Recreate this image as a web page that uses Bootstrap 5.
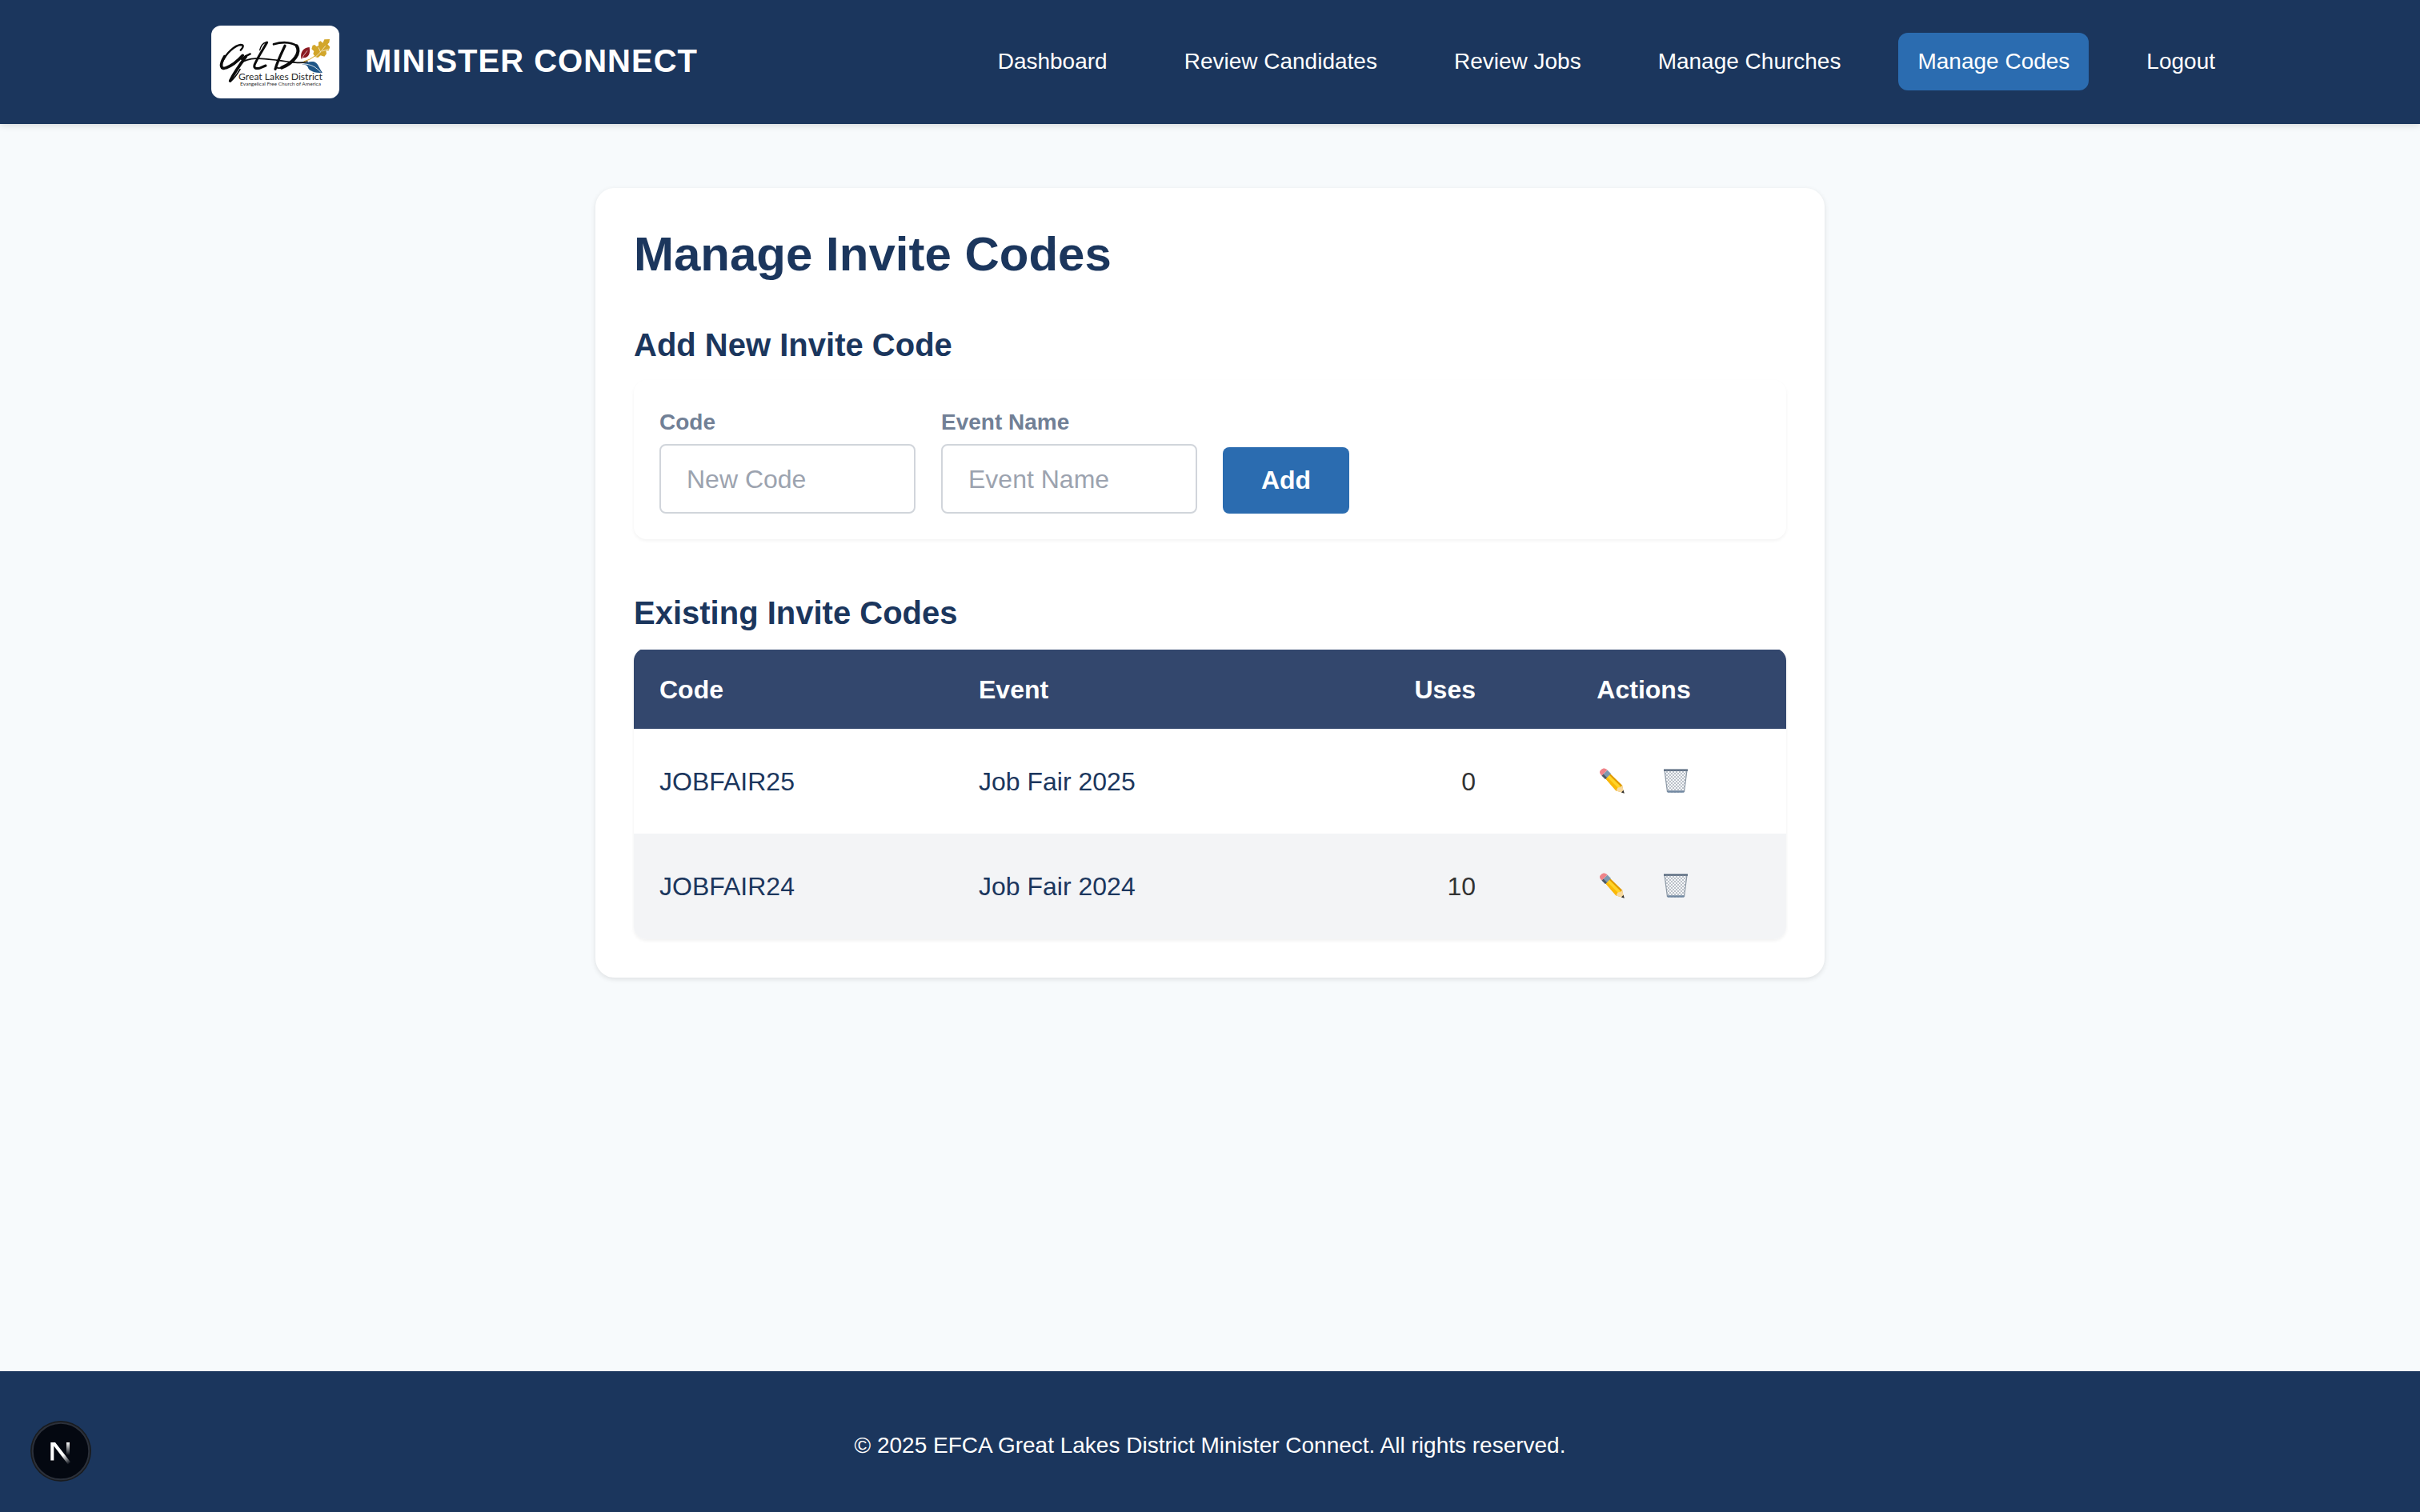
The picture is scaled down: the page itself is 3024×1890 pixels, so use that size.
<!DOCTYPE html>
<html lang="en">
<head>
<meta charset="utf-8">
<title>Minister Connect</title>
<link href="https://cdn.jsdelivr.net/npm/bootstrap@5.3.0/dist/css/bootstrap.min.css" rel="stylesheet">
<style>
  body { font-family: "Liberation Sans", Arial, sans-serif; font-size: 32px; line-height: 48px; background: #f7fafc; color: #333; }
  .site-header { background: #1b365d; height: 155px; box-shadow: 0 2px 8px rgba(0,0,0,.13); z-index: 2; }
  .site-inner { width: 2560px; padding-left: 32px; }
  .logo-tile { width: 160px; height: 91px; border-radius: 12px; background: #fff; }
  .site-title { font-size: 40px; letter-spacing: 1px; line-height: 56px; margin-left: 32px; padding-bottom: 3px; }
  .site-nav { gap: 48px; padding-bottom: 1px; }
  .site-nav .nav-link { font-size: 28px; line-height: 40px; padding: 16px 24px; border-radius: 12px; color: #fff; white-space: nowrap; }
  .site-nav .nav-link.active { background: #2b6cb0; }
  .panel { width: 1536px; margin-top: 80px; padding: 47px 48px 48px; border-radius: 24px; background: #fff; box-shadow: 0 2px 6px rgba(0,0,0,.11); }
  h1, h2, .navy { color: #1b365d; }
  h1 { font-size: 60px; line-height: 72px; margin-bottom: 49px; }
  h2 { font-size: 40px; line-height: 56px; margin-bottom: 16px; }
  .code-form { padding: 32px; gap: 32px; border-radius: 16px; margin-bottom: 64px; box-shadow: 0 2px 4px rgba(0,0,0,.05); }
  .code-form label { font-size: 28px; line-height: 40px; padding-top: 1px; margin-bottom: 7px; color: #718096; }
  .code-form .form-control { width: 320px; height: 87px; border: 2px solid #d1d5db; border-radius: 8px; padding: 18px 32px 16px; font-size: 32px; }
  .code-form .form-control::placeholder { color: #9ca3af; }
  .btn-add { width: 158px; height: 83px; border-radius: 8px; background: #2b6cb0; color: #fff; font-size: 32px; padding: 0 0 1px; }
  .codes-wrap { border-radius: 16px; padding-top: 2px; height: 364px; box-shadow: 0 2px 4px rgba(0,0,0,.06); }
  .codes { table-layout: fixed; margin: 0; color: inherit; }
  .codes th, .codes td { padding: 0 32px; border: 0; vertical-align: middle; box-shadow: none; color: inherit; }
  .codes thead th { height: 99px; background: #33476d; color: #fff; }
  .codes tbody td { height: 131px; background: #fff; }
  .codes tbody tr:last-child td { height: 132px; background: #f3f4f6; }
  .codes td.navy { color: #1b365d; }
  .acts { gap: 44px; padding-bottom: 2px; }
  .site-footer { background: #1b365d; height: 176px; padding-top: 9px; font-size: 28px; }
  .dev-badge { left: 38px; bottom: 38px; width: 76px; height: 76px; }
</style>
<script src="https://cdn.jsdelivr.net/npm/bootstrap@5.3.0/dist/js/bootstrap.bundle.min.js"></script>
</head>
<body class="d-flex flex-column min-vh-100">
<svg width="0" height="0" class="position-absolute" aria-hidden="true">
  <defs>
    <linearGradient id="body" x1="0" y1="1" x2="1" y2="0"><stop offset="0" stop-color="#f0a800"/><stop offset=".5" stop-color="#ffcc12"/><stop offset="1" stop-color="#c98700"/></linearGradient>
    <pattern id="mesh" width="4" height="4" patternUnits="userSpaceOnUse"><path d="M0 0L4 4M4 0L0 4" stroke="#929ba6" stroke-width=".6"/></pattern>
    <symbol id="pencil" viewBox="0 0 34 34">
      <path d="M9 14L15 8L30 22.500L32 32L22.500 29.500Z" fill="#e09a00"/>
      <path d="M9 14L13.500 9.500L28.500 24.500L25 28.500L22.500 29.500Z" fill="#fbb908"/>
      <path d="M11 12L13.500 9.500L28.500 24.500L26 27Z" fill="#ffd42a"/>
      <path d="M22.500 29.500L24.500 25.500L28 25L30 22.500L32.500 32.500Z" fill="#f7d9a0"/>
      <path d="M29 31.400L31.600 28.800L32.800 32.800Z" fill="#2b2b2b"/>
      <path d="M4.500 10.500L11.500 3.500L16 8L9 15Z" fill="#7e99b0"/>
      <path d="M4.500 10.500L6.500 8.500L11 13L9 15Z" fill="#4d5965"/>
      <path d="M4.500 10.500C1 7 1.500 5 4 3C6 1 8.500 .8 11.500 3.500Z" fill="#ef8389"/>
    </symbol>
    <symbol id="trash" viewBox="0 0 34 34">
      <path d="M3 4H31L27.500 31Q17 33 6.500 31Z" fill="#f5f7f9"/>
      <path d="M3 4H31L27.500 31Q17 33 6.500 31Z" fill="url(#mesh)"/>
      <path d="M3 4L6.500 31M31 4L27.500 31" stroke="#8c98a5" stroke-width="1.200"/>
      <path d="M2 2.500H32V4.800H2Z" fill="#53657a"/>
      <path d="M6.300 29.300H27.700L27.300 31.800H6.700Z" fill="#7289a2"/>
    </symbol>
    <linearGradient id="nd" gradientUnits="userSpaceOnUse" x1="80" y1="128" x2="88" y2="139"><stop offset="0" stop-color="#fff"/><stop offset="1" stop-color="#fff" stop-opacity="0"/></linearGradient>
    <linearGradient id="nv" x1="0" y1="0" x2="0" y2="1"><stop offset="0" stop-color="#fff"/><stop offset="1" stop-color="#fff" stop-opacity="0"/></linearGradient>
  </defs>
</svg>

<header class="site-header position-relative d-flex justify-content-center">
  <div class="site-inner d-flex align-items-center justify-content-between">
    <div class="d-flex align-items-center">
      <div class="logo-tile">
        <svg class="d-block" width="160" height="91" viewBox="42 36 480 273">
          <g fill="none" stroke="#0b0b0b" stroke-linecap="round" stroke-linejoin="round">
            <path stroke-width="7" d="M152 128Q170 108 152 108C130 110 98 140 83 172"/>
            <path stroke-width="11" d="M92 152C72 185 78 202 98 194C122 186 142 168 160 148"/>
            <path stroke-width="7" d="M188 142Q168 150 156 162"/>
            <path stroke-width="11" d="M172 152C150 182 128 212 113 243"/>
            <path stroke-width="5" d="M118 242Q132 230 150 200"/>
            <path stroke-width="9" d="M251 99C232 132 212 162 204 184Q200 200 222 196L246 186"/>
            <path stroke-width="4" d="M246 99Q230 104 224 128"/>
            <path stroke-width="5" d="M150 178C190 150 240 160 290 166S370 180 402 172"/>
            <path stroke-width="10" d="M318 112C304 142 290 170 282 199"/>
            <path stroke-width="8" d="M276 106C315 94 352 100 366 116"/>
            <path stroke-width="12" d="M362 112C380 138 350 176 306 194"/>
            <path stroke-width="5" d="M318 190Q296 200 284 192"/>
          </g>
          <path d="M380 163C374 140 384 119 410 117C414 140 408 158 386 157Z" fill="#8b1a22"/>
          <path d="M378 166Q388 146 402 130" stroke="#fff" stroke-width="2" fill="none"/>
          <path d="M432 154L424 142L427 132L418 124L422 110L430 108L436 114L444 112L444 98L452 94L460 101L466 88L486 87L484 100L478 106L487 116L482 130L472 130L474 142L466 152L452 148L442 156Z" fill="#d2a62a"/>
          <path d="M388 171Q434 160 470 106" stroke="#d2a62a" stroke-width="3" fill="none"/>
          <path d="M428 158Q450 140 470 112M452 136L444 118M458 132L482 124" stroke="#fff" stroke-width="2" fill="none"/>
          <path d="M382 181C400 176 412 168 428 172C444 178 446 198 459 212C440 214 426 212 414 204C402 198 408 190 396 184Z" fill="#1f5687"/>
          <path d="M386 180C416 180 434 192 452 210" stroke="#fff" stroke-width="2.500" fill="none"/>
          <text x="144" y="241" font-family="Lato, sans-serif" font-size="33" fill="#2b2b2b" textLength="315" lengthAdjust="spacingAndGlyphs">Great Lakes District</text>
          <text x="150" y="261" font-family="Lato, sans-serif" font-size="18" fill="#2b2b2b" textLength="303" lengthAdjust="spacingAndGlyphs">Evangelical Free Church of America</text>
        </svg>
      </div>
      <div class="site-title fw-bold text-white">MINISTER CONNECT</div>
    </div>
    <nav class="site-nav nav flex-nowrap">
      <a class="nav-link" href="#">Dashboard</a>
      <a class="nav-link" href="#">Review Candidates</a>
      <a class="nav-link" href="#">Review Jobs</a>
      <a class="nav-link" href="#">Manage Churches</a>
      <a class="nav-link active" href="#">Manage Codes</a>
      <a class="nav-link" href="#">Logout</a>
    </nav>
  </div>
</header>

<main class="flex-grow-1 d-flex justify-content-center align-items-start">
  <section class="panel">
    <h1 class="fw-bold">Manage Invite Codes</h1>
    <h2 class="fw-bold">Add New Invite Code</h2>
    <form class="code-form d-flex align-items-end">
      <div class="d-flex flex-column">
        <label class="fw-bold" for="code">Code</label>
        <input class="form-control" id="code" placeholder="New Code">
      </div>
      <div class="d-flex flex-column">
        <label class="fw-bold" for="event">Event Name</label>
        <input class="form-control" id="event" placeholder="Event Name">
      </div>
      <button type="button" class="btn btn-add fw-bold">Add</button>
    </form>
    <h2 class="fw-bold">Existing Invite Codes</h2>
    <div class="codes-wrap overflow-hidden">
      <table class="table codes">
        <colgroup><col style="width:399px"><col style="width:410px"><col style="width:275px"><col style="width:356px"></colgroup>
        <thead>
          <tr><th>Code</th><th>Event</th><th class="text-end">Uses</th><th class="text-center">Actions</th></tr>
        </thead>
        <tbody>
          <tr>
            <td class="navy">JOBFAIR25</td><td class="navy">Job Fair 2025</td><td class="text-end">0</td>
            <td><div class="acts d-flex justify-content-center"><svg width="36" height="34"><use href="#pencil"/></svg><svg width="36" height="34"><use href="#trash"/></svg></div></td>
          </tr>
          <tr>
            <td class="navy">JOBFAIR24</td><td class="navy">Job Fair 2024</td><td class="text-end">10</td>
            <td><div class="acts d-flex justify-content-center"><svg width="36" height="34"><use href="#pencil"/></svg><svg width="36" height="34"><use href="#trash"/></svg></div></td>
          </tr>
        </tbody>
      </table>
    </div>
  </section>
</main>

<footer class="site-footer d-flex align-items-center justify-content-center text-white">© 2025 EFCA Great Lakes District Minister Connect. All rights reserved.</footer>

<svg class="dev-badge position-fixed" viewBox="38 86 76 76">
  <circle cx="76" cy="124" r="38" fill="#191b1e"/>
  <circle cx="76" cy="124" r="35.300" fill="#040811" stroke="#2b303a" stroke-width="2"/>
  <path d="M63.300 113H69L88 137.500L85 140.500L67.300 117.500V135.500H63.300Z" fill="url(#nd)"/>
  <rect x="83" y="113" width="4" height="16" fill="url(#nv)"/>
</svg>
</body>
</html>
